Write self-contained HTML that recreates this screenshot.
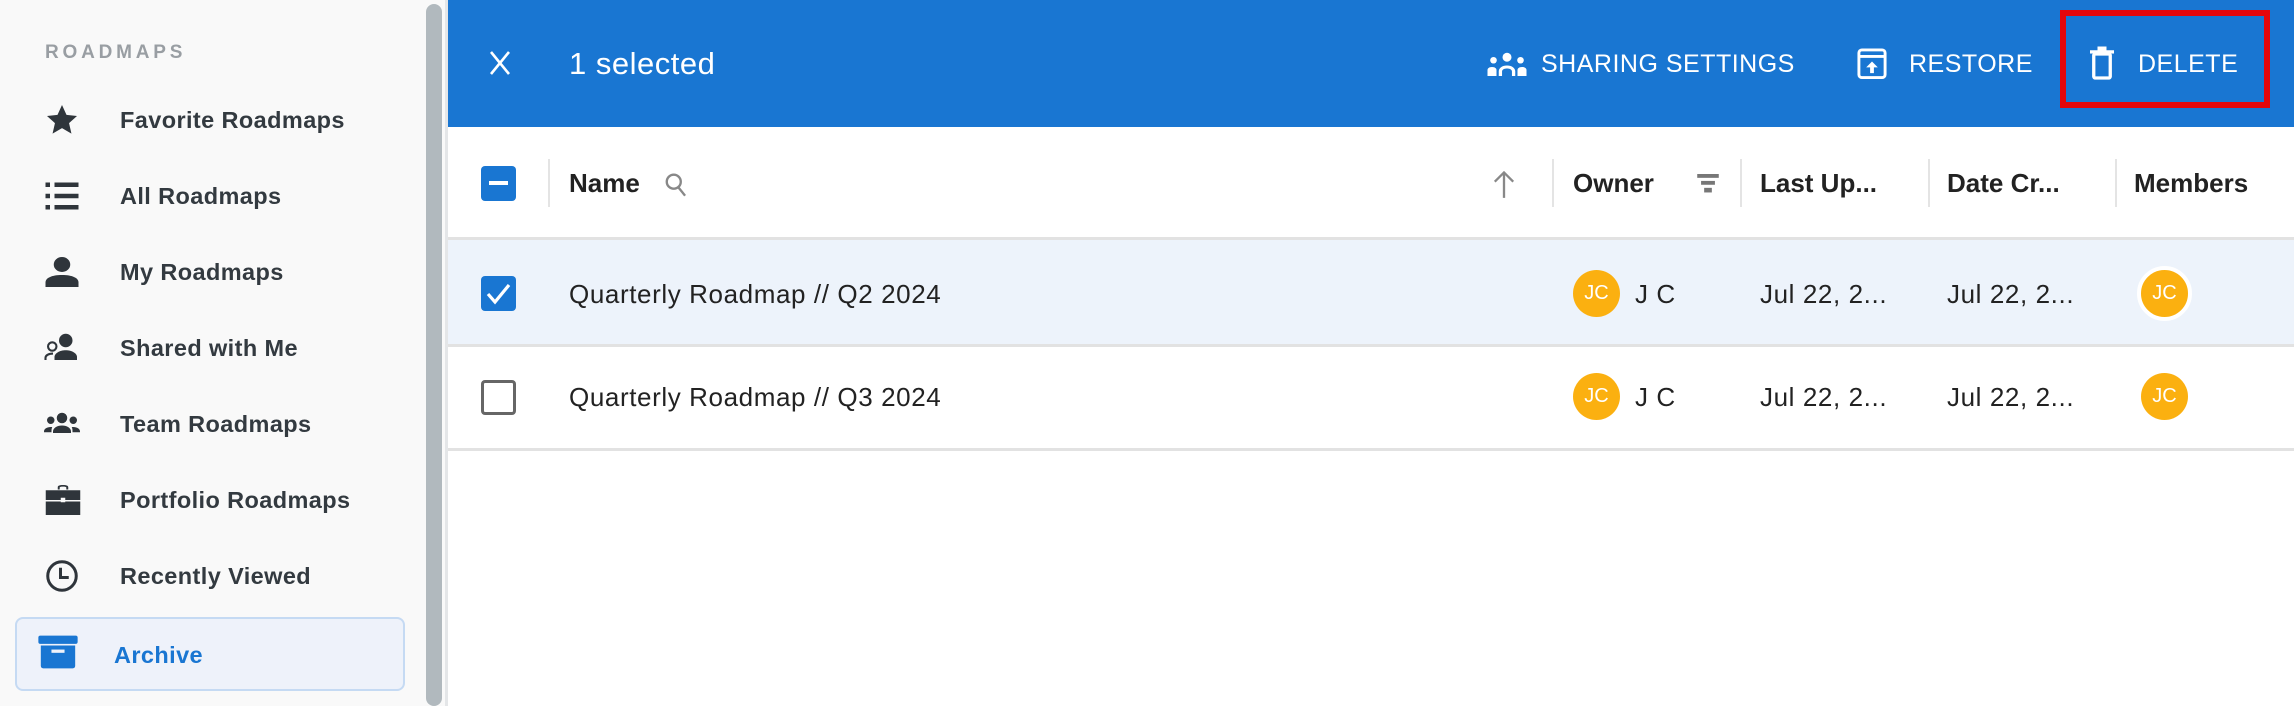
<!DOCTYPE html>
<html><head><meta charset="utf-8"><style>
*{margin:0;padding:0;box-sizing:border-box}
body{width:2294px;height:706px;overflow:hidden;background:#fff;font-family:"Liberation Sans",Arial,sans-serif;position:relative}
.a{position:absolute}
#side{left:0;top:0;width:445px;height:706px;background:#f9f9f9}
.thumb{left:426px;top:4px;width:16px;height:702px;background:#b1b9be;border-radius:8px}
.vb{left:445px;top:0;width:3px;height:706px;background:#e4e6e8}
.ttl{left:45px;top:42px;font-size:19px;font-weight:bold;letter-spacing:3.8px;color:#999ea3}
.it{left:120px;font-size:23.5px;font-weight:bold;color:#333a40;line-height:30px;letter-spacing:0.4px}
.ic{left:44px;width:36px;height:36px}
.arch{left:15px;top:617px;width:390px;height:74px;background:#eef2fa;border:2px solid #c5daf3;border-radius:8px}
#hdr{left:448px;top:0;width:1846px;height:127px;background:#1976d2}
.ht{color:#fff;font-size:25px;line-height:30px;letter-spacing:0.5px}
.th{font-size:26px;font-weight:bold;color:#222;line-height:30px;top:168px}
.sep{width:2px;height:48px;top:159px;background:#e4e4e4}
.row{left:448px;width:1846px}
.td{font-size:26px;color:#222;line-height:30px;letter-spacing:0.6px}
.av{width:47px;height:47px;border-radius:50%;background:#fbb010;color:#fff;font-size:20px;text-align:center;line-height:47px}
.cb{width:35px;height:35px;border-radius:4px}
</style></head><body>
<div id="side" class="a"></div>
<div class="a thumb"></div>
<div class="a vb"></div>
<div class="a ttl">ROADMAPS</div>

<svg class="a ic" style="top:102px" viewBox="0 0 24 24"><path fill="#2f353b" d="M12 2l3 6.6 7 .7-5.3 4.8 1.6 7L12 17.4 5.7 21.1l1.6-7L2 9.3l7-.7z"/></svg>
<div class="a it" style="top:181px;left:120px">All Roadmaps</div>
<div class="a it" style="top:105px">Favorite Roadmaps</div>
<svg class="a ic" style="top:178px" viewBox="0 0 24 24"><g fill="#2f353b"><rect x="1" y="3" width="3" height="3"/><rect x="1" y="10.5" width="3" height="3"/><rect x="1" y="18" width="3" height="3"/><rect x="7" y="3" width="16" height="3"/><rect x="7" y="10.5" width="16" height="3"/><rect x="7" y="18" width="16" height="3"/></g></svg>
<svg class="a ic" style="top:254px" viewBox="0 0 24 24"><g fill="#2f353b"><ellipse cx="12" cy="7" rx="5.5" ry="5"/><path d="M1 22v-3c0-3 4-5 11-5s11 2 11 5v3z"/></g></svg>
<div class="a it" style="top:257px">My Roadmaps</div>
<svg class="a ic" style="top:330px" viewBox="0 0 24 24"><g fill="#2f353b"><circle cx="14.5" cy="7" r="4.5"/><path d="M7 20v-2c0-2.5 3.5-4.5 7.5-4.5S22 15.5 22 18v2z"/></g><g fill="none" stroke="#2f353b" stroke-width="1.4"><circle cx="5.5" cy="11" r="2.8"/><path d="M1 20v-1.5c0-1.5 2-2.8 5-2.8"/></g></svg>
<div class="a it" style="top:333px">Shared with Me</div>
<svg class="a ic" style="top:406px" viewBox="0 0 24 24"><g fill="#2f353b"><circle cx="12" cy="8" r="3.5"/><circle cx="4.5" cy="9.5" r="2.5"/><circle cx="19.5" cy="9.5" r="2.5"/><path d="M6 17c0-2.5 3-4 6-4s6 1.5 6 4v1H6z"/><path d="M0 17c0-1.8 2-3 4.5-3 .8 0 1 .2 1 .2C5 15 5 16 5 17.5H0zM24 17c0-1.8-2-3-4.5-3-.8 0-1 .2-1 .2.5.8.5 1.8.5 3.3H24z"/></g></svg>
<div class="a it" style="top:409px">Team Roadmaps</div>
<svg class="a ic" style="top:482px;width:38px" viewBox="0 0 24 24"><g fill="#2f353b"><path d="M8.5 5V3.5C8.5 2.5 9.5 2 12 2s3.5.5 3.5 1.5V5h-1.3V3.6c0-.3-.8-.5-2.2-.5s-2.2.2-2.2.5V5z"/><rect x="0.5" y="5.5" width="23" height="6.5"/><rect x="0.5" y="13" width="23" height="9"/><rect x="10.5" y="10.5" width="3" height="3" fill="#f9f9f9"/></g></svg>
<div class="a it" style="top:485px">Portfolio Roadmaps</div>
<svg class="a ic" style="top:558px" viewBox="0 0 24 24"><g fill="none" stroke="#2f353b" stroke-width="2"><circle cx="12" cy="12" r="9.5"/><path d="M11 6.5V13h5.5"/></g></svg>
<div class="a it" style="top:561px">Recently Viewed</div>
<div class="a arch"></div>
<svg class="a" style="left:38px;top:634px;width:40px;height:36px" viewBox="0 0 24 22"><g fill="#1976d2"><rect x="0" y="1" width="24" height="5" rx="1.2"/><path d="M1.5 7h21v12.5a1.5 1.5 0 0 1-1.5 1.5H3a1.5 1.5 0 0 1-1.5-1.5z"/></g><rect x="8" y="9.5" width="8" height="2" fill="#eef2fa"/></svg>
<div class="a it" style="top:640px;left:114px;color:#1976d2">Archive</div>

<div id="hdr" class="a"></div>
<svg class="a" style="left:488px;top:50px;width:24px;height:26px" viewBox="0 0 24 26"><path d="M3 2l18 22M21 2L3 24" stroke="#fff" stroke-width="2.6"/></svg>
<div class="a ht" style="left:569px;top:47px;font-size:31px;line-height:34px">1 selected</div>
<svg class="a" style="left:1486px;top:52px;width:42px;height:24px" viewBox="0 0 28 16"><g fill="#fff"><circle cx="14" cy="3.5" r="3"/><circle cx="5" cy="5.5" r="2.2"/><circle cx="23" cy="5.5" r="2.2"/><path d="M8.5 16v-3c0-2.5 2.5-4 5.5-4s5.5 1.5 5.5 4v3h-2.2v-3c0-1.3-1.5-2-3.3-2s-3.3.7-3.3 2v3z"/><path d="M1 16v-4c0-1 1-2 3-2s3 1 3 2v4zM21 16v-4c0-1 1-2 3-2s3 1 3 2v4z"/></g></svg>
<div class="a ht" style="left:1541px;top:49px">SHARING SETTINGS</div>
<svg class="a" style="left:1857px;top:47px;width:30px;height:32px" viewBox="0 0 20 22"><g fill="none" stroke="#fff" stroke-width="2"><rect x="1" y="2" width="18" height="19" rx="2"/><path d="M1 6.5h18"/></g><path d="M10 10l-4 4h2.7v4h2.6v-4H14z" fill="#fff"/></svg>
<div class="a ht" style="left:1909px;top:49px">RESTORE</div>
<svg class="a" style="left:2090px;top:46px;width:24px;height:34px" viewBox="0 0 16 22"><g fill="none" stroke="#fff" stroke-width="2.2"><rect x="2.5" y="5" width="11" height="16" rx="1"/></g><rect x="0" y="2.5" width="16" height="2.2" fill="#fff"/><rect x="5" y="0" width="6" height="3" fill="#fff"/></svg>
<div class="a ht" style="left:2138px;top:49px">DELETE</div>
<div class="a" style="left:2060px;top:10px;width:210px;height:98px;border:6px solid #e4060b"></div>

<div class="a cb" style="left:481px;top:166px;background:#1976d2"><div class="a" style="left:8px;top:15px;width:19px;height:4px;background:#fff"></div></div>
<div class="a sep" style="left:548px"></div>
<div class="a th" style="left:569px">Name</div>
<svg class="a" style="left:664px;top:172px;width:26px;height:28px" viewBox="0 0 24 26"><g fill="none" stroke="#888" stroke-width="2.2"><circle cx="9" cy="9" r="6.5"/><path d="M13.5 14.5l6 7.5"/></g></svg>
<svg class="a" style="left:1492px;top:169px;width:24px;height:30px" viewBox="0 0 20 26"><path d="M10 25V3M2 11l8-8 8 8" fill="none" stroke="#888" stroke-width="2"/></svg>
<div class="a sep" style="left:1552px"></div>
<div class="a th" style="left:1573px">Owner</div>
<svg class="a" style="left:1697px;top:174px;width:22px;height:20px" viewBox="0 0 14 13"><g fill="#777"><rect x="0" y="0" width="14" height="2.5"/><rect x="2.5" y="4.5" width="9" height="2.5"/><rect x="4.5" y="9" width="5" height="3"/></g></svg>
<div class="a sep" style="left:1740px"></div>
<div class="a th" style="left:1760px">Last Up...</div>
<div class="a sep" style="left:1928px"></div>
<div class="a th" style="left:1947px">Date Cr...</div>
<div class="a sep" style="left:2115px"></div>
<div class="a th" style="left:2134px">Members</div>

<div class="a row" style="top:237px;height:3px;background:#e2e2e2"></div>
<div class="a row" style="top:240px;height:104px;background:#edf3fb"></div>
<div class="a row" style="top:344px;height:3px;background:#e2e2e2"></div>
<div class="a row" style="top:448px;height:3px;background:#e2e2e2"></div>

<div class="a cb" style="left:481px;top:276px;background:#1976d2"><svg class="a" style="left:4px;top:5px;width:27px;height:25px" viewBox="0 0 27 25"><path d="M3 13l7 8L24 4" fill="none" stroke="#fff" stroke-width="3.2"/></svg></div>
<div class="a td" style="left:569px;top:279px">Quarterly Roadmap // Q2 2024</div>
<div class="a av" style="left:1573px;top:270px">JC</div>
<div class="a td" style="left:1635px;top:279px">J C</div>
<div class="a td" style="left:1760px;top:279px">Jul 22, 2...</div>
<div class="a td" style="left:1947px;top:279px">Jul 22, 2...</div>
<div class="a av" style="left:2137px;top:266px;width:55px;height:55px;border:4px solid #fff;line-height:47px">JC</div>

<div class="a cb" style="left:481px;top:380px;border:3px solid #666;background:#fff"></div>
<div class="a td" style="left:569px;top:382px">Quarterly Roadmap // Q3 2024</div>
<div class="a av" style="left:1573px;top:373px">JC</div>
<div class="a td" style="left:1635px;top:382px">J C</div>
<div class="a td" style="left:1760px;top:382px">Jul 22, 2...</div>
<div class="a td" style="left:1947px;top:382px">Jul 22, 2...</div>
<div class="a av" style="left:2141px;top:373px">JC</div>
</body></html>
